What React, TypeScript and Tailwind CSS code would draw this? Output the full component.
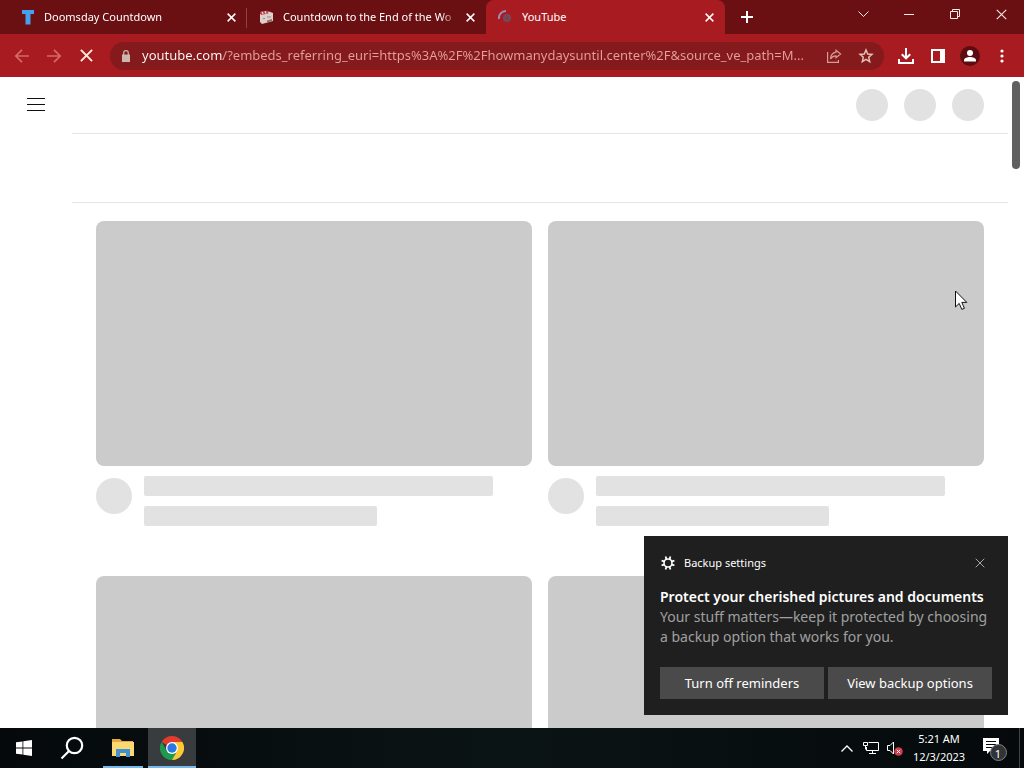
import type { ReactNode } from 'react'
import { clsx } from 'clsx'

interface TabProps {
  title: string
  icon: ReactNode
  active?: boolean
  divider?: boolean
}

function CloseIcon({ size = 9, strokeWidth = 1.6 }: { size?: number; strokeWidth?: number }) {
  return (
    <svg width={size} height={size} viewBox="0 0 10 10" fill="none" stroke="currentColor" strokeWidth={strokeWidth}>
      <path d="M.7.7l8.6 8.6M9.3.7L.7 9.3" />
    </svg>
  )
}

function Tab({ title, icon, active, divider }: TabProps) {
  return (
    <div
      className={clsx(
        'relative flex h-full w-[239px] min-w-0 items-center pl-3 pr-2 text-white',
        active && 'rounded-t-lg bg-[#a81b20]',
      )}
    >
      {icon}
      <span
        className={clsx(
          'ml-2 min-w-0 flex-1 overflow-hidden whitespace-nowrap text-[11px] leading-4',
          !active && 'mask-r-from-90%',
        )}
      >
        {title}
      </span>
      <button aria-label={`Close ${title}`} className="ml-1 flex size-4 items-center justify-center">
        <CloseIcon />
      </button>
      {divider && <span className="absolute right-0 top-2 h-5 w-px bg-[#8f4340]" />}
    </div>
  )
}

function TabStrip() {
  return (
    <div className="flex h-[34px] shrink-0 bg-[#6b1012]">
      <div className="flex min-w-0 flex-1 pl-2">
        <Tab
          title="Doomsday Countdown"
          divider
          icon={
            <svg className="shrink-0" width="16" height="16" viewBox="0 0 16 16">
              <path d="M2 1h12v4h-3.500v10.500h-5V5H2z" fill="#45a0ee" />
            </svg>
          }
        />
        <Tab
          title="Countdown to the End of the Wo"
          icon={
            <svg className="shrink-0" width="16" height="16" viewBox="0 0 16 16">
              <path d="M1 5l9-2.500 4 1.500V12L3 15 1 13z" fill="#ddd0cc" />
              <path d="M1 3l7.500-1.500 1 3L2 6z" fill="#c84a4c" />
              <path d="M3 2.500l1 2.500M6 2l1 2.500" stroke="#f6efec" />
              <path d="M4 9.500h2M8 8h4" stroke="#9a8582" strokeWidth="1.200" />
              <path d="M8 11.500l5-1.500v2l-5 1.500z" fill="#8f6f6c" />
            </svg>
          }
        />
        <Tab
          title="YouTube"
          active
          icon={
            <svg className="shrink-0" width="16" height="16" viewBox="0 0 16 16" fill="none">
              <circle cx="9" cy="9" r="4" fill="#704b5a" />
              <circle cx="9" cy="9" r="1.500" fill="#8f3445" />
              <path d="M1 10a7 7 0 0 1 7-8" stroke="#a08cbb" strokeWidth="2" />
            </svg>
          }
        />
        <button aria-label="New tab" className="ml-2 flex w-7 items-center justify-center text-white">
          <svg width="12" height="12" viewBox="0 0 12 12" stroke="currentColor" strokeWidth="2">
            <path d="M6 0v12M0 6h12" />
          </svg>
        </button>
      </div>
      <div className="flex h-7 text-[#fbe9e8]">
        <button aria-label="Search tabs" className="flex w-[46px] items-center justify-center">
          <svg width="11" height="7" viewBox="0 0 11 7" fill="none" stroke="currentColor">
            <path d="M.5.500l5 5 5-5" />
          </svg>
        </button>
        <button aria-label="Minimize" className="flex w-[46px] items-center justify-center">
          <svg width="10" height="1" viewBox="0 0 10 1">
            <path d="M0 0h10v1H0z" fill="currentColor" />
          </svg>
        </button>
        <button aria-label="Restore" className="flex w-[46px] items-center justify-center">
          <svg width="10" height="10" viewBox="0 0 10 10" fill="none" stroke="currentColor">
            <path d="M.5 2.500h7v7h-7zM2.500 2.500v-2h7v7h-2" />
          </svg>
        </button>
        <button aria-label="Close" className="flex w-[46px] items-center justify-center">
          <CloseIcon size={11} strokeWidth={1} />
        </button>
      </div>
    </div>
  )
}

function ToolButton({ label, className, children }: { label: string; className?: string; children: ReactNode }) {
  return (
    <button aria-label={label} className={clsx('flex size-8 shrink-0 items-center justify-center', className)}>
      {children}
    </button>
  )
}

function Toolbar() {
  return (
    <div className="flex h-[43px] shrink-0 items-center bg-[#a81b20] px-1.5 text-white">
      <ToolButton label="Back" className="text-[#d66a68]">
        <svg width="16" height="16" viewBox="0 0 16 16" fill="none" stroke="currentColor" strokeWidth="1.700">
          <path d="M15 8H2M8 1.800L1.800 8 8 14.200" />
        </svg>
      </ToolButton>
      <ToolButton label="Forward" className="text-[#d66a68]">
        <svg width="16" height="16" viewBox="0 0 16 16" fill="none" stroke="currentColor" strokeWidth="1.700">
          <path d="M1 8h13M8 1.800L14.200 8 8 14.200" />
        </svg>
      </ToolButton>
      <ToolButton label="Stop" className="text-[#fdebdc]">
        <CloseIcon size={13} strokeWidth={1.5} />
      </ToolButton>
      <div className="ml-2 mr-1.5 flex h-7 min-w-0 flex-1 items-center rounded-full bg-[#841a1c] pl-3 pr-0.5">
        <svg className="mr-3 shrink-0" width="8" height="12" viewBox="0 0 8 12">
          <path d="M0 4.500h8V12H0z" fill="#cbb7ad" />
          <path d="M1.700 5V3a2.300 2.300 0 0 1 4.600 0v2" fill="none" stroke="#cbb7ad" strokeWidth="1.200" />
        </svg>
        <input
          type="text"
          aria-label="Address"
          defaultValue="youtube.com/?embeds_referring_euri=https%3A%2F%2Fhowmanydaysuntil.center%2F&source_ve_path=M..."
          className="min-w-0 flex-1 bg-[linear-gradient(to_right,#fff_81px,#e5a09a_81px)] bg-clip-text pb-0.5 text-[13px] leading-5 text-transparent outline-none"
        />
        <ToolButton label="Share" className="text-[#d69c94]">
          <svg width="16" height="16" viewBox="0 0 16 16" fill="none" stroke="currentColor" strokeWidth="1.200">
            <path d="M1.600 4v10.400h10.800V12" />
            <path d="M10 2.200L14.600 6 10 9.800V7.800C7.500 7.800 5.800 8.800 4.500 11 4.800 7 6.800 4.700 10 4.200z" />
          </svg>
        </ToolButton>
        <ToolButton label="Bookmark this tab" className="text-[#e2c0b8]">
          <svg width="16" height="16" viewBox="0 0 16 16" fill="none" stroke="currentColor" strokeWidth="1.500">
            <path d="M8 2l1.700 4 4.300.4-3.300 2.900 1 4.300L8 11.300l-3.700 2.300 1-4.300L2 6.400 6.300 6z" />
          </svg>
        </ToolButton>
      </div>
      <ToolButton label="Downloads">
        <svg width="16" height="16" viewBox="0 0 16 16" fill="none" stroke="currentColor" strokeWidth="2">
          <path d="M8 0v10M3.800 6.200L8 10.400l4.200-4.200M1 11v4h14v-4" />
        </svg>
      </ToolButton>
      <ToolButton label="Side panel">
        <svg width="14" height="14" viewBox="0 0 14 14">
          <path fillRule="evenodd" d="M0 0h14v14H0zM2 2v10h7V2z" fill="currentColor" />
        </svg>
      </ToolButton>
      <ToolButton label="Profile">
        <svg width="20" height="20" viewBox="0 0 20 20">
          <circle cx="10" cy="10" r="10" fill="#5c0c10" />
          <circle cx="10" cy="7" r="3" fill="currentColor" />
          <path d="M4 15.500v-1.300c0-2 3.500-3.200 6-3.200s6 1.200 6 3.200v1.300z" fill="currentColor" />
        </svg>
      </ToolButton>
      <ToolButton label="Menu">
        <svg width="4" height="14" viewBox="0 0 4 14" fill="currentColor">
          <circle cx="2" cy="2" r="1.600" />
          <circle cx="2" cy="7" r="1.600" />
          <circle cx="2" cy="12" r="1.600" />
        </svg>
      </ToolButton>
    </div>
  )
}

function VideoSkeleton() {
  return (
    <div>
      <div className="aspect-video rounded-lg bg-[#cbcbcb]" />
      <div className="mt-3 flex gap-3">
        <div className="size-9 shrink-0 rounded-full bg-[#e2e2e2]" />
        <div className="-mt-0.5 flex-1">
          <div className="h-5 w-[90%] rounded-xs bg-[#e2e2e2]" />
          <div className="mt-2.5 h-5 w-[60%] rounded-xs bg-[#e2e2e2]" />
        </div>
      </div>
    </div>
  )
}

function Page() {
  return (
    <main className="flex min-h-0 flex-1 overflow-hidden bg-white">
      <div className="w-[72px] shrink-0 pl-[27px] pt-[21px]">
        <button aria-label="Guide" className="block">
          <svg width="18" height="13" viewBox="0 0 18 13" fill="#0f0f0f">
            <path d="M0 0h18v1H0zM0 6h18v1H0zM0 12h18v1H0z" />
          </svg>
        </button>
      </div>
      <div className="min-w-0 flex-1">
        <div className="flex h-[57px] items-center justify-end gap-4 border-b border-[#e5e5e5] pr-6">
          <div className="size-8 rounded-full bg-[#e2e2e2]" />
          <div className="size-8 rounded-full bg-[#e2e2e2]" />
          <div className="size-8 rounded-full bg-[#e2e2e2]" />
        </div>
        <div className="h-[69px] border-b border-[#e5e5e5]" />
        <div className="mt-[18px] grid grid-cols-2 gap-x-4 gap-y-[50px] px-6">
          <VideoSkeleton />
          <VideoSkeleton />
          <VideoSkeleton />
          <VideoSkeleton />
        </div>
      </div>
      <div className="w-4 shrink-0 px-1 pt-1">
        <div className="h-[88px] rounded-full bg-[#606060]" />
      </div>
    </main>
  )
}

function BackupToast() {
  return (
    <section className="absolute bottom-[53px] right-4 w-[364px] bg-[#1f1f1f] p-4 text-white">
      <div className="flex h-[22px] items-center">
        <svg width="16" height="16" viewBox="0 0 16 16" fill="none" stroke="currentColor">
          <circle cx="8" cy="8" r="4" strokeWidth="1.600" />
          <path
            d="M6.400 4.200L5.600 1.600M9.600 4.200l.8-2.600M6.400 11.800l-.8 2.600M9.600 11.800l.8 2.600M4.200 6.400l-2.600-.8M4.200 9.600l-2.600.8M11.800 6.400l2.600-.8M11.800 9.600l2.600.8"
            strokeWidth="1.800"
          />
        </svg>
        <span className="ml-2 flex-1 text-[11px] leading-4">Backup settings</span>
        <button aria-label="Dismiss" className="mr-[7px] text-[#a5a5a5]">
          <CloseIcon size={10} strokeWidth={1} />
        </button>
      </div>
      <h2 className="mt-[13px] whitespace-nowrap text-[14px] font-semibold leading-5">
        Protect your cherished pictures and documents
      </h2>
      <p className="whitespace-nowrap text-[14px] leading-5 text-[#a0a0a0]">
        Your stuff matters—keep it protected by choosing
        <br />a backup option that works for you.
      </p>
      <div className="mt-5 flex gap-1 text-[13px] leading-5">
        <button className="h-8 flex-1 whitespace-nowrap bg-[#4a4a4a]">Turn off reminders</button>
        <button className="h-8 flex-1 whitespace-nowrap bg-[#4a4a4a]">View backup options</button>
      </div>
    </section>
  )
}

function Taskbar() {
  return (
    <footer className="flex h-10 shrink-0 bg-linear-to-r from-[#05090b] via-[#0b1415] to-[#05090b] text-white">
      <button aria-label="Start" className="flex w-12 items-center justify-center">
        <svg width="16" height="16" viewBox="0 0 16 16" fill="currentColor">
          <path d="M0 2.300L6.500 1.400v6.200H0zM7.300 1.300L16 0v7.600H7.300zM0 8.400h6.500v6.200L0 13.700zM7.300 8.400H16V16l-8.700-1.300z" />
        </svg>
      </button>
      <button aria-label="Search" className="flex w-12 items-center justify-center">
        <svg width="24" height="24" viewBox="0 0 24 24" fill="none" stroke="currentColor" strokeWidth="2.200">
          <circle cx="14.500" cy="9.500" r="7.700" />
          <path d="M9 15l-7.500 7.500" />
        </svg>
      </button>
      <button aria-label="File Explorer" className="relative ml-[7px] flex w-10 items-center justify-center">
        <svg width="22" height="18" viewBox="0 0 22 18">
          <path d="M0 0h8l2 2h11v3H0z" fill="#e4a93a" />
          <path d="M0 3h22v14H0z" fill="#fbd872" />
          <path d="M4 10h14v8h-4v-4H8v4H4z" fill="#3f91cf" />
        </svg>
        <span className="absolute inset-x-0 bottom-0 h-0.5 bg-[#76b9ed]" />
      </button>
      <button aria-label="Google Chrome" className="relative ml-[5px] flex w-12 items-center justify-center bg-[#393c3e]">
        <svg width="24" height="24" viewBox="0 0 24 24">
          <path d="M12 12L1.600 6a12 12 0 0 1 20.800 0z" fill="#e33b2e" />
          <path d="M12 12V6h10.400A12 12 0 0 1 12 24z" fill="#fcc934" />
          <path d="M1.600 6L6.800 15l5.200 3 4.500-1.500L12 24A12 12 0 0 1 1.600 6z" fill="#1e9a4f" />
          <circle cx="12" cy="12" r="6" fill="#fff" />
          <circle cx="12" cy="12" r="4.700" fill="#2a78e4" />
        </svg>
        <span className="absolute inset-x-0 bottom-0 h-0.5 bg-[#76b9ed]" />
      </button>
      <div className="flex-1" />
      <button aria-label="Show hidden icons" className="flex w-6 items-center justify-center">
        <svg width="12" height="7" viewBox="0 0 12 7" fill="none" stroke="currentColor" strokeWidth="1.300">
          <path d="M.5 6.500L6 1l5.500 5.500" />
        </svg>
      </button>
      <button aria-label="Network" className="flex w-6 items-center justify-center">
        <svg width="16" height="14" viewBox="0 0 16 14" fill="none" stroke="currentColor">
          <path d="M5.500 1.500h10v8H3.500V6M9.500 9.500v3M6 12.500h7" />
          <path d="M.5 1.500h4v3h-4zM2.500 4.500v4" />
        </svg>
      </button>
      <button aria-label="Volume" className="flex w-6 items-center justify-center">
        <svg width="16" height="16" viewBox="0 0 16 16" fill="none">
          <path d="M.5 5.500h2.500L6.500 2v12L3 10.500H.5z" stroke="currentColor" />
          <circle cx="11.500" cy="11.500" r="4.300" fill="#d23c4a" />
          <path d="M9.800 9.800l3.400 3.400M13.200 9.800l-3.400 3.400" stroke="currentColor" />
        </svg>
      </button>
      <button className="w-16 whitespace-nowrap text-center text-[11px] leading-[18px]">
        5:21 AM
        <br />
        12/3/2023
      </button>
      <button aria-label="Notifications" className="relative flex w-[45px] items-center justify-center">
        <svg width="26" height="26" viewBox="0 0 26 26">
          <path d="M2 3h16v13H9l-3 3v-3H2z" fill="currentColor" />
          <path d="M5 6.500h10M5 9.500h10M5 12.500h7" stroke="#05090b" />
          <circle cx="17.500" cy="17.500" r="8" fill="#303436" stroke="#7e8284" />
        </svg>
        <span className="absolute left-[19px] top-[17px] w-4 text-center text-[11px] leading-[18px]">1</span>
      </button>
      <span className="ml-[3px] mr-1 w-px bg-[#404446]" />
    </footer>
  )
}

export default function App() {
  return (
    <div className="relative flex h-screen flex-col overflow-hidden font-['Noto_Sans','Open_Sans',sans-serif]">
      <TabStrip />
      <Toolbar />
      <Page />
      <Taskbar />
      <BackupToast />
      <svg className="absolute left-[955px] top-[290px]" width="13" height="21" viewBox="0 0 13 21">
        <path d="M.5 1v16l3.700-3.600 2.600 6 2.600-1.100-2.600-5.900h5z" fill="#fff" stroke="#111" />
      </svg>
    </div>
  )
}
